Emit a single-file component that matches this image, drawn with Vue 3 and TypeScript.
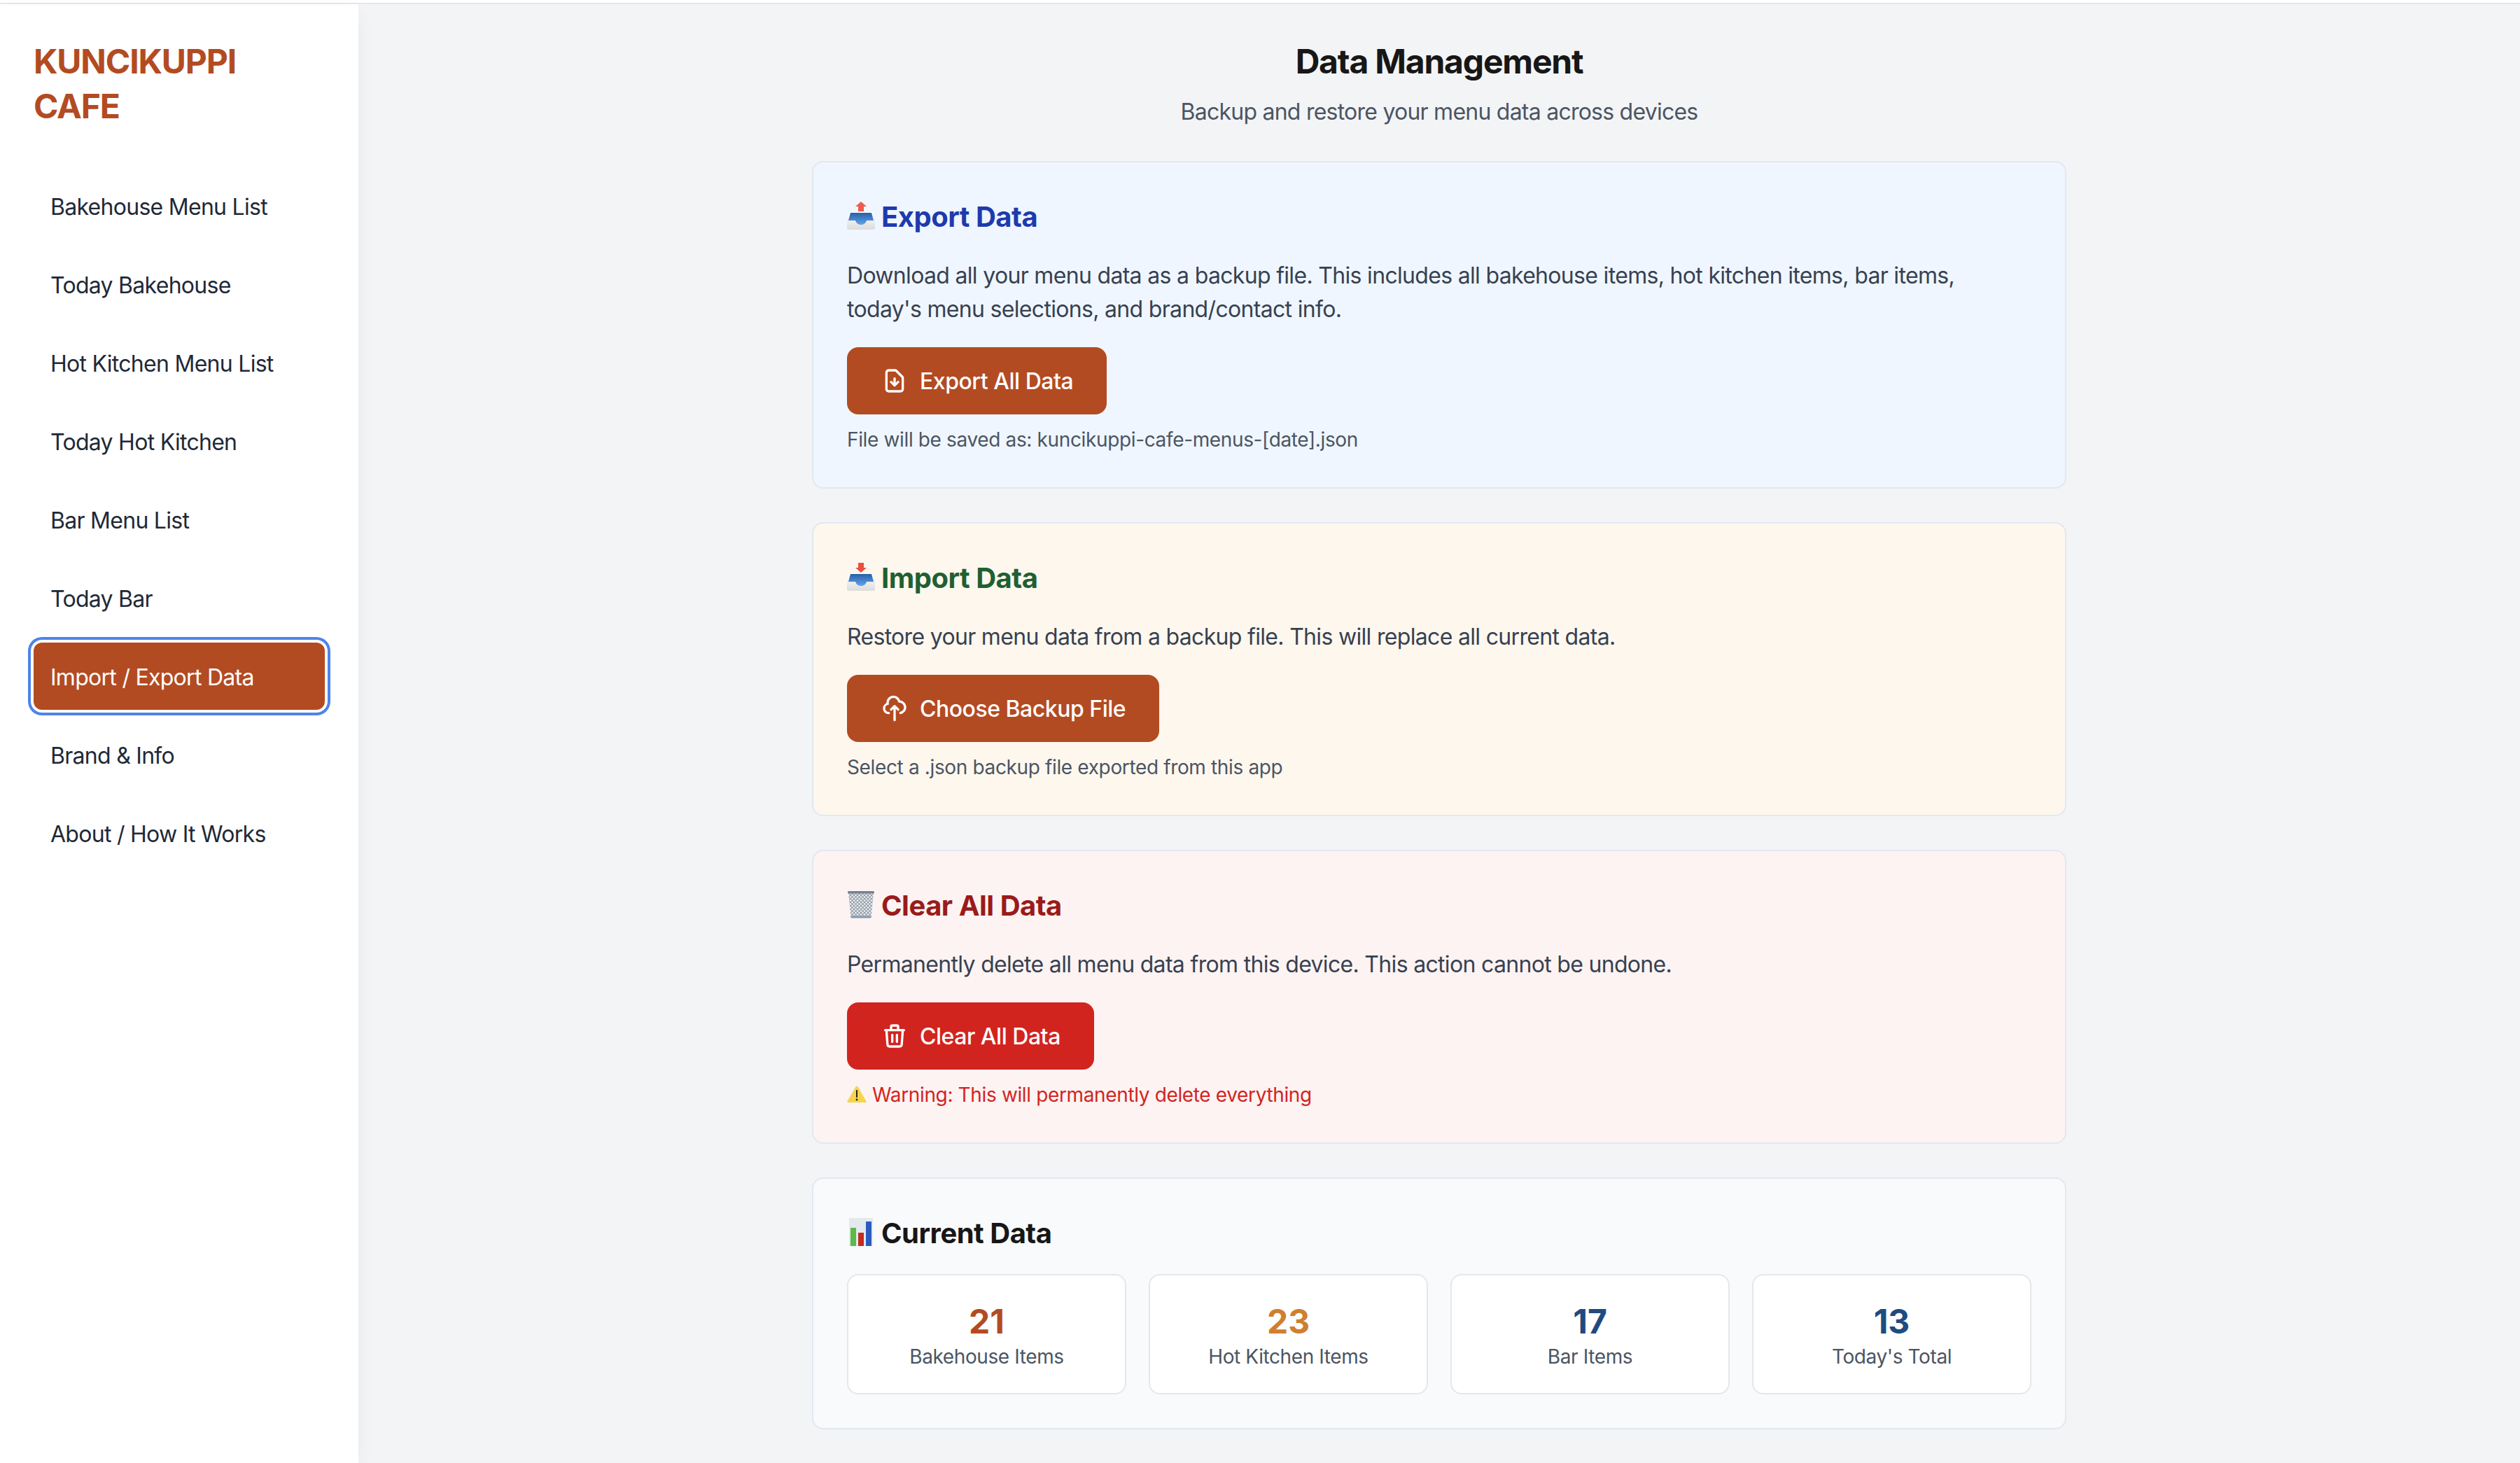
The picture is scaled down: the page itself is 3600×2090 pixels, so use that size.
<script setup lang="ts">
const navItems: string[] = [
  'Bakehouse Menu List',
  'Today Bakehouse',
  'Hot Kitchen Menu List',
  'Today Hot Kitchen',
  'Bar Menu List',
  'Today Bar',
  'Import / Export Data',
  'Brand & Info',
  'About / How It Works',
]
const activeItem = 'Import / Export Data'
const stats = [
  { value: 21, label: 'Bakehouse Items', tone: 'rust' },
  { value: 23, label: 'Hot Kitchen Items', tone: 'amber' },
  { value: 17, label: 'Bar Items', tone: 'navy' },
  { value: 13, label: "Today's Total", tone: 'navy' },
]
</script>

<template>
  <div class="app">
    <div class="topbar"></div>
    <div class="shell">
      <aside class="sidebar">
        <h1 class="logo">KUNCIKUPPI<br />CAFE</h1>
        <nav class="nav">
          <a v-for="item in navItems" :key="item" class="nav-item" :class="{ active: item === activeItem }">{{ item }}</a>
        </nav>
      </aside>
      <main class="main">
        <div class="column">
          <header class="page-head">
            <h2 class="page-title">Data Management</h2>
            <p class="page-sub">Backup and restore your menu data across devices</p>
          </header>

          <section class="card card-export">
            <h3 class="card-title title-export">
              <svg class="emoji" viewBox="0 0 40 56" width="40" height="56">
                <defs>
                  <linearGradient id="blueA" x1="0" y1="0" x2="0" y2="1"><stop offset="0" stop-color="#2a5fa8" /><stop offset="1" stop-color="#5ea4ec" /></linearGradient>
                  <linearGradient id="trayA" x1="0" y1="0" x2="0" y2="1"><stop offset="0" stop-color="#ffffff" /><stop offset="1" stop-color="#dcdcda" /></linearGradient>
                </defs>
                <path d="M20 8 L28 15 H24 V22 H16 V15 H12 Z" fill="#ee5a4b" />
                <path d="M4 23 H36 L40 35 V46 Q40 48 38 48 H2 Q0 48 0 46 V35 Z" fill="url(#trayA)" />
                <path d="M5 24 H35 L38 35 H28 Q26 41 20 41 Q14 41 12 35 H2 Z" fill="url(#blueA)" />
              </svg>
              <span>Export Data</span>
            </h3>
            <p class="card-text">Download all your menu data as a backup file. This includes all bakehouse items, hot kitchen items, bar items, today's menu selections, and brand/contact info.</p>
            <button class="btn btn-rust" type="button">
              <svg class="btn-icon" viewBox="0 0 24 24" fill="none" stroke="currentColor" stroke-width="2" stroke-linecap="round" stroke-linejoin="round">
                <path d="M12 10v6m0 0l-3-3m3 3l3-3m2 8H7a2 2 0 01-2-2V5a2 2 0 012-2h5.586a1 1 0 01.707.293l5.414 5.414a1 1 0 01.293.707V19a2 2 0 01-2 2z" />
              </svg>
              <span>Export All Data</span>
            </button>
            <p class="hint">File will be saved as: kuncikuppi-cafe-menus-[date].json</p>
          </section>

          <section class="card card-import">
            <h3 class="card-title title-import">
              <svg class="emoji" viewBox="0 0 40 56" width="40" height="56">
                <defs>
                  <linearGradient id="blueB" x1="0" y1="0" x2="0" y2="1"><stop offset="0" stop-color="#2a5fa8" /><stop offset="1" stop-color="#5ea4ec" /></linearGradient>
                  <linearGradient id="trayB" x1="0" y1="0" x2="0" y2="1"><stop offset="0" stop-color="#ffffff" /><stop offset="1" stop-color="#dcdcda" /></linearGradient>
                </defs>
                <path d="M16 8 H24 V15 H28 L20 22 L12 15 H16 Z" fill="#e9503f" />
                <path d="M4 23 H36 L40 35 V46 Q40 48 38 48 H2 Q0 48 0 46 V35 Z" fill="url(#trayB)" />
                <path d="M5 24 H35 L38 35 H28 Q26 41 20 41 Q14 41 12 35 H2 Z" fill="url(#blueB)" />
              </svg>
              <span>Import Data</span>
            </h3>
            <p class="card-text">Restore your menu data from a backup file. This will replace all current data.</p>
            <button class="btn btn-rust" type="button">
              <svg class="btn-icon" viewBox="0 0 24 24" fill="none" stroke="currentColor" stroke-width="2" stroke-linecap="round" stroke-linejoin="round">
                <path d="M7 16a4 4 0 01-.88-7.903A5 5 0 1115.9 6L16 6a5 5 0 011 9.9M15 13l-3-3m0 0l-3 3m3-3v12" />
              </svg>
              <span>Choose Backup File</span>
            </button>
            <p class="hint">Select a .json backup file exported from this app</p>
          </section>

          <section class="card card-clear">
            <h3 class="card-title title-clear">
              <svg class="emoji" viewBox="0 0 40 56" width="40" height="56">
                <defs>
                  <pattern id="mesh" width="5" height="5" patternUnits="userSpaceOnUse">
                    <rect width="5" height="5" fill="#f0f2f3" />
                    <path d="M0 0 L5 5 M5 0 L0 5" stroke="#8d99a4" stroke-width="1.1" />
                  </pattern>
                </defs>
                <path d="M2 11 H38 L34.5 47 H5.5 Z" fill="url(#mesh)" />
                <rect x="1" y="9" width="38" height="3.5" rx="1.5" fill="#76828d" />
                <rect x="5.5" y="44.5" width="29" height="3" rx="1.2" fill="#8499ac" />
              </svg>
              <span>Clear All Data</span>
            </h3>
            <p class="card-text">Permanently delete all menu data from this device. This action cannot be undone.</p>
            <button class="btn btn-red" type="button">
              <svg class="btn-icon" viewBox="0 0 24 24" fill="none" stroke="currentColor" stroke-width="2" stroke-linecap="round" stroke-linejoin="round">
                <path d="M19 7l-.867 12.142A2 2 0 0116.138 21H7.862a2 2 0 01-1.995-1.858L5 7m5 4v6m4-6v6m1-10V4a1 1 0 00-1-1h-4a1 1 0 00-1 1v3M4 7h16" />
              </svg>
              <span>Clear All Data</span>
            </button>
            <p class="hint hint-warning">
              <svg class="warn" viewBox="0 0 28 40" width="28" height="40">
                <path d="M14 7.5 Q15 7.5 15.6 8.6 L27.4 29 Q28.2 31 26 31 H2 Q-0.2 31 0.6 29 L12.4 8.6 Q13 7.5 14 7.5 Z" fill="#f8d44c" />
                <rect x="13" y="13" width="2" height="11" rx="1" fill="#222" />
                <circle cx="14" cy="27" r="1.4" fill="#222" />
              </svg>
              <span>Warning: This will permanently delete everything</span>
            </p>
          </section>

          <section class="card card-current">
            <h3 class="card-title title-current">
              <svg class="emoji" viewBox="0 0 40 56" width="40" height="56">
                <rect x="3" y="8" width="34" height="40" fill="#e4e9ef" />
                <rect x="5" y="22" width="8" height="26" fill="#5cba47" />
                <rect x="16" y="29" width="8" height="19" fill="#c42c1e" />
                <rect x="27" y="13" width="8" height="35" fill="#2a5bbf" />
              </svg>
              <span>Current Data</span>
            </h3>
            <div class="stats">
              <div v-for="stat in stats" :key="stat.label" class="stat">
                <div class="stat-value" :class="stat.tone">{{ stat.value }}</div>
                <div class="stat-label">{{ stat.label }}</div>
              </div>
            </div>
          </section>
        </div>
      </main>
    </div>
  </div>
</template>

<style scoped>
.app {
  display: flex;
  flex-direction: column;
  height: 2090px;
  overflow: hidden;
  font-family: Inter, "Noto Sans", sans-serif;
  background: #f3f4f6;
}
.topbar {
  height: 6px;
  box-sizing: border-box;
  background: #fff;
  border-bottom: 2px solid #e5e7eb;
  flex: none;
}
.shell {
  flex: 1;
  display: flex;
  min-height: 0;
}
.sidebar {
  width: 512px;
  flex: none;
  box-sizing: border-box;
  padding: 48px;
  background: #fff;
  box-shadow: 0 8px 30px -6px rgba(0, 0, 0, 0.07);
}
.logo {
  margin: 0 0 62px;
  padding-top: 2px;
  font-size: 48px;
  line-height: 64px;
  font-weight: 700;
  letter-spacing: -1.15px;
  color: #b34b22;
}
.nav {
  display: flex;
  flex-direction: column;
  gap: 16px;
}
.nav-item {
  display: block;
  padding: 26px 24px 22px;
  font-size: 32px;
  line-height: 48px;
  letter-spacing: -0.72px;
  color: #1f2937;
  border-radius: 12px;
}
.nav-item.active {
  background: #b34b22;
  color: #fff;
  box-shadow: 0 0 0 4px #fff, 0 0 0 8px #4f83ea;
}
.main {
  flex: 1;
  min-width: 0;
  padding: 48px 0;
}
.column {
  width: 1792px;
  margin: 0 auto;
  display: flex;
  flex-direction: column;
  gap: 48px;
}
.page-head {
  text-align: center;
  padding-top: 2px;
  margin-bottom: -2px;
}
.page-title {
  margin: 0;
  font-size: 48px;
  line-height: 64px;
  font-weight: 700;
  letter-spacing: -1.2px;
  color: #171717;
}
.page-sub {
  margin: 16px 0 0;
  font-size: 32px;
  line-height: 48px;
  letter-spacing: -0.76px;
  color: #4b5563;
}
.card {
  box-sizing: border-box;
  padding: 48px;
  border: 2px solid #e2e8f0;
  border-radius: 16px;
}
.card-export { background: #eff6ff; }
.card-import { background: #fef7ee; }
.card-clear { background: #fdf3f2; }
.card-current { background: #f9fafb; }
.card-title {
  display: flex;
  align-items: center;
  gap: 9px;
  height: 56px;
  margin: 0 0 32px;
  font-size: 40px;
  line-height: 56px;
  font-weight: 700;
  letter-spacing: -0.5px;
}
.card-title span { padding-top: 4px; }
.title-export { color: #1e3aae; }
.title-import { color: #1f6032; }
.title-clear { color: #991b1b; }
.title-current { color: #171717; }
.emoji { flex: none; display: block; }
.card-text {
  margin: 0 0 30px;
  padding-top: 2px;
  font-size: 32px;
  line-height: 48px;
  letter-spacing: -0.68px;
  color: #374151;
}
.btn {
  display: inline-flex;
  align-items: center;
  gap: 16px;
  box-sizing: border-box;
  height: 96px;
  padding: 0 48px;
  border: 0;
  border-radius: 16px;
  color: #fff;
  font: 500 32px/48px Inter, "Noto Sans", sans-serif;
  letter-spacing: -0.48px;
  vertical-align: top;
}
.btn span { padding-top: 2px; }
.btn-rust { background: #b34b22; }
.btn-red { background: #d2241f; }
.btn-icon { width: 40px; height: 40px; flex: none; }
.hint {
  margin: 16px 0 0;
  font-size: 28px;
  line-height: 40px;
  letter-spacing: -0.36px;
  color: #4b5563;
}
.hint-warning {
  display: flex;
  align-items: center;
  gap: 8px;
  color: #d2241f;
}
.warn { flex: none; display: block; }
.stats {
  display: grid;
  grid-template-columns: repeat(4, 1fr);
  gap: 32px;
}
.stat {
  padding: 32px;
  background: #fff;
  border: 2px solid #e5e7eb;
  border-radius: 16px;
  text-align: center;
}
.stat-value {
  padding-top: 2px;
  margin-bottom: -2px;
  font-size: 48px;
  line-height: 64px;
  font-weight: 700;
}
.stat-value.rust { color: #b34b22; }
.stat-value.amber { color: #cf7f2f; }
.stat-value.navy { color: #204b80; }
.stat-label {
  font-size: 28px;
  line-height: 40px;
  letter-spacing: -0.4px;
  color: #4b5563;
}
</style>

<style>
html, body { margin: 0; padding: 0; overflow: hidden; }
</style>
